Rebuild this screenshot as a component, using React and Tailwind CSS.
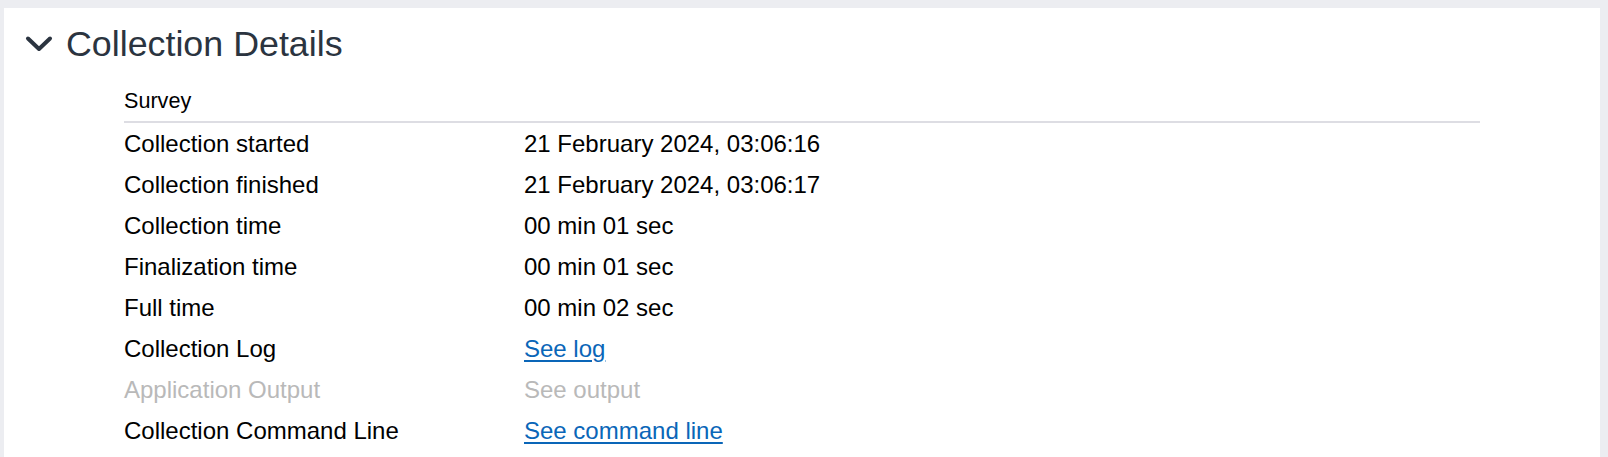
import React from 'react';

const rows = [
    { label: 'Collection started', value: '21 February 2024, 03:06:16' },
    { label: 'Collection finished', value: '21 February 2024, 03:06:17' },
    { label: 'Collection time', value: '00 min 01 sec' },
    { label: 'Finalization time', value: '00 min 01 sec' },
    { label: 'Full time', value: '00 min 02 sec' },
    { label: 'Collection Log', value: 'See log', link: true },
    { label: 'Application Output', value: 'See output', disabled: true },
    { label: 'Collection Command Line', value: 'See command line', link: true },
];

const Chevron = () => (
    <svg width="28" height="18" viewBox="0 0 28 18" fill="none" className="shrink-0">
        <path d="M3 3.5 L14 14 L25 3.5" stroke="#2b3440" strokeWidth="4" strokeLinecap="round" strokeLinejoin="round" />
    </svg>
);

const App = () => {
    return (
        <div className="min-h-[457px] bg-[#ecedf1] pt-[8px] pl-[4px] pr-[8px] font-['Liberation_Sans',Arial,sans-serif]">
            <div className="h-[449px] bg-white pt-[16px]">
                {/* Header */}
                <div className="flex items-center h-[40px] pl-[21px]">
                    <Chevron />
                    <h2 className="ml-[13px] text-[35.8px] leading-[40px] text-[#2b3440]">Collection Details</h2>
                </div>

                {/* Details table */}
                <div className="ml-[120px] w-[1356px] mt-[25px]">
                    <div className="text-[21.6px] leading-[24px] text-black pb-[8px] border-b-2 border-[#dddde3]">
                        Survey
                    </div>
                    {rows.map((row) => (
                        <div
                            key={row.label}
                            className={`flex h-[41px] items-center text-[24px] ${row.disabled ? 'text-[#b9b9b9]' : 'text-black'}`}
                        >
                            <div className="w-[400px]">{row.label}</div>
                            <div>
                                {row.link ? (
                                    <a href="#" className="text-[#0a66b8] underline underline-offset-[3px] decoration-2">
                                        {row.value}
                                    </a>
                                ) : (
                                    row.value
                                )}
                            </div>
                        </div>
                    ))}
                </div>
            </div>
        </div>
    );
};

export default App;
